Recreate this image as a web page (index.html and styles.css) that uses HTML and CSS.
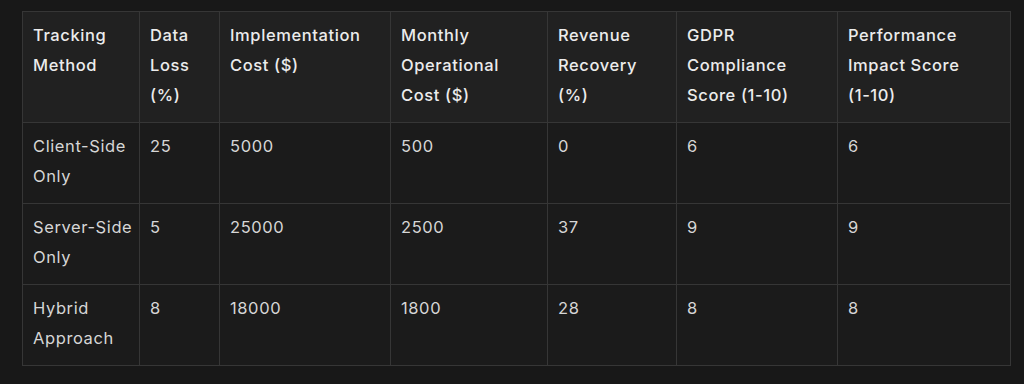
FILE: index.html
```html
<!DOCTYPE html>
<html lang="en">
<head>
<meta charset="utf-8">
<link rel="stylesheet" href="styles.css">
</head>
<body>
<div class="wrap">
<table class="data">
<colgroup>
<col class="c1"><col class="c2"><col class="c3"><col class="c4"><col class="c5"><col class="c6"><col class="c7">
</colgroup>
<thead>
<tr>
<th>Tracking Method</th>
<th>Data Loss (%)</th>
<th>Implementation Cost ($)</th>
<th>Monthly Operational Cost ($)</th>
<th>Revenue Recovery (%)</th>
<th>GDPR Compliance Score (1-10)</th>
<th>Performance Impact Score <span class="nw">(1-10)</span></th>
</tr>
</thead>
<tbody>
<tr><td><span class="nw">Client-Side</span> Only</td><td>25</td><td>5000</td><td>500</td><td>0</td><td>6</td><td>6</td></tr>
<tr><td><span class="nw">Server-Side</span> Only</td><td>5</td><td>25000</td><td>2500</td><td>37</td><td>9</td><td>9</td></tr>
<tr><td>Hybrid Approach</td><td>8</td><td>18000</td><td>1800</td><td>28</td><td>8</td><td>8</td></tr>
</tbody>
</table>
</div>
</body>
</html>
```
FILE: styles.css
```css
html, body {
  margin: 0;
  padding: 0;
  background: #181818;
}
body {
  width: 1024px;
  height: 384px;
  overflow: hidden;
  font-family: Inter, "Noto Sans", sans-serif;
}
.wrap {
  padding: 11px 14px 0 22px;
}
.data {
  border-collapse: collapse;
  table-layout: fixed;
  width: 988px;
  font-size: 16.5px;
  letter-spacing: 0.6px;
  line-height: 30px;
}
.c1 { width: 117px; }
.c2 { width: 80px; }
.c3 { width: 171px; }
.c4 { width: 157px; }
.c5 { width: 129px; }
.c6 { width: 161px; }
.c7 { width: 173px; }
.nw { white-space: nowrap; }
.data th, .data td {
  border: 1px solid #363636;
  padding: 8px 10px 12px 10px;
  text-align: left;
  vertical-align: top;
}
.data th {
  background: #212121;
  color: #ececec;
  font-weight: 500;
}
.data td {
  background: #1b1b1b;
  color: #d6d6d6;
  font-weight: 400;
}
```
